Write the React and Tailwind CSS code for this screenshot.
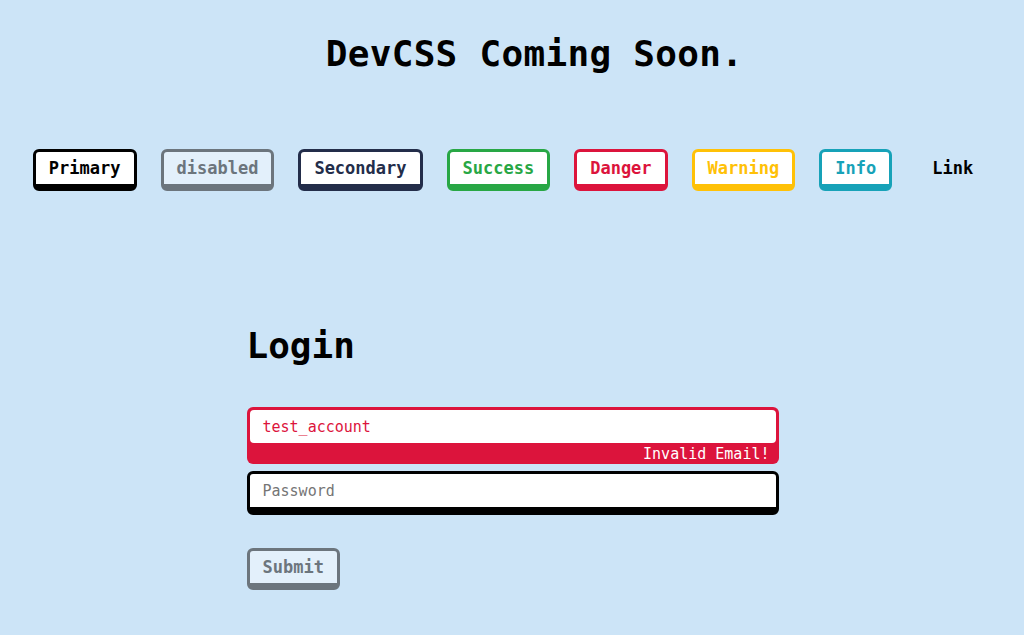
import React from "react";

const mono = { fontFamily: '"DejaVu Sans Mono", "Liberation Mono", monospace' };

const base =
  "border-[3px] border-b-[7px] rounded-[6px] px-[13px] py-[6px] leading-[20px] text-[17px] font-bold";

const buttons = [
  { label: "Primary", cls: "border-black text-black bg-white" },
  { label: "disabled", cls: "border-[#6c757d] text-[#6c757d] bg-[#e3f0fb]" },
  { label: "Secondary", cls: "border-[#232d4a] text-[#232d4a] bg-white" },
  { label: "Success", cls: "border-[#28a745] text-[#28a745] bg-white" },
  { label: "Danger", cls: "border-[#dc143c] text-[#dc143c] bg-white" },
  { label: "Warning", cls: "border-[#ffc107] text-[#ffc107] bg-white" },
  { label: "Info", cls: "border-[#17a2b8] text-[#17a2b8] bg-white" },
  { label: "Link", cls: "border-transparent text-black bg-transparent" },
];

export default function App() {
  return (
    <div className="min-h-[635px] w-full bg-[#cce4f7] text-black" style={mono}>
      <div className="pt-[33px] pl-[45px] text-center text-[36px] leading-[42px] font-bold tracking-[0.3px]">
        DevCSS Coming Soon.
      </div>
      <div className="mt-[74px] flex justify-center gap-[24px] pr-[2px]">
        {buttons.map((b) => (
          <button key={b.label} className={`${base} ${b.cls}`} style={mono}>
            {b.label}
          </button>
        ))}
      </div>
      <div className="mx-auto mt-[134px] w-[533px] pl-px">
        <h1 className="text-[36px] leading-[42px] font-bold">Login</h1>
        <div className="mt-[40px] rounded-[6px] bg-[#dc143c] px-[3px] pt-[3px]">
          <div className="flex h-[33px] items-center rounded-[4px] bg-white px-[13px] text-[15px] leading-[20px] text-[#dc143c]">
            test_account
          </div>
          <div className="pt-px pr-[6px] text-right text-[15px] leading-[20px] text-white">
            Invalid Email!
          </div>
        </div>
        <div className="mt-[7px] rounded-[6px] border-[3px] border-b-[8px] border-black bg-white">
          <div className="flex h-[33px] items-center px-[13px] text-[15px] leading-[20px] text-[#757575]">
            Password
          </div>
        </div>
        <button
          className={`${base} mt-[33px] border-[#6c757d] text-[#6c757d] bg-[#e3f0fb]`}
          style={mono}
        >
          Submit
        </button>
      </div>
    </div>
  );
}
